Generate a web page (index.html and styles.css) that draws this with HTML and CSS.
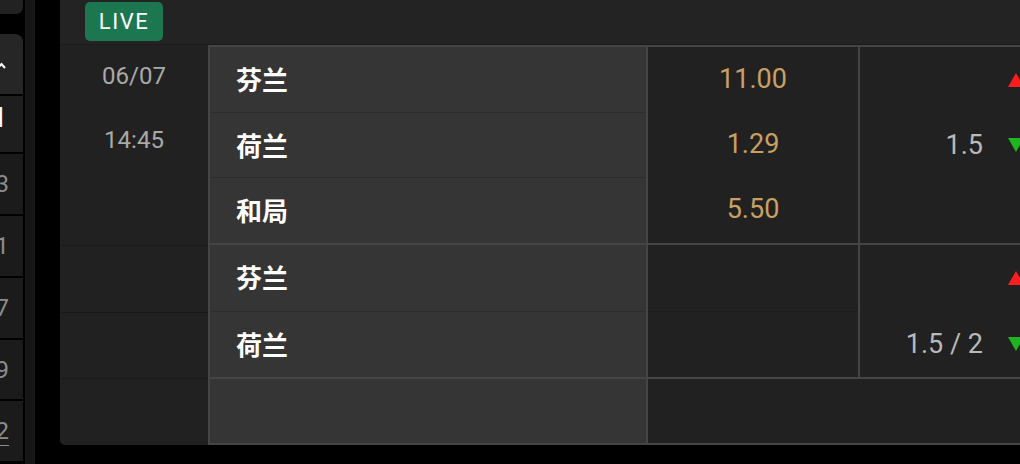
FILE: index.html
```html
<!DOCTYPE html>
<html lang="zh">
<head>
<meta charset="utf-8">
<title>LIVE</title>
<link rel="stylesheet" href="styles.css">
</head>
<body>
<div class="page">
  <aside class="sidebar">
    <div class="side-cap"></div>
    <div class="side-card side-card--head">
      <svg class="side-mark" width="6" height="8" viewBox="0 0 6 8"><path d="M-3 7 L1.5 2 L5 6" fill="none" stroke="#fff" stroke-width="2"/></svg>
    </div>
    <div class="side-card side-card--live"><div class="side-inner side-inner--white">HI</div></div>
    <div class="side-card"><div class="side-inner">13</div></div>
    <div class="side-card"><div class="side-inner">21</div></div>
    <div class="side-card"><div class="side-inner">17</div></div>
    <div class="side-card side-card--short"><div class="side-inner">19</div></div>
    <div class="side-card"><div class="side-inner side-inner--link">12</div></div>
  </aside>
  <div class="rail"></div>
  <main class="panel">
    <header class="panel-head"><span class="badge-live">LIVE</span></header>
    <section class="match">
      <div class="date-col">
        <div class="date-main"><span>06/07</span><span>14:45</span></div>
        <div class="date-row"></div>
        <div class="date-row date-row--short"></div>
        <div class="date-last"></div>
      </div>
      <div class="market">
        <div class="teams">
          <div class="team-row">芬兰</div>
          <div class="team-row">荷兰</div>
          <div class="team-row">和局</div>
        </div>
        <div class="odds">
          <div class="odds-row">11.00</div>
          <div class="odds-row">1.29</div>
          <div class="odds-row">5.50</div>
        </div>
        <div class="hdp">
          <div class="hdp-row"><span class="hdp-val"></span><span class="tri tri--up"></span></div>
          <div class="hdp-row"><span class="hdp-val">1.5</span><span class="tri tri--down"></span></div>
          <div class="hdp-row"></div>
        </div>

        <div class="teams">
          <div class="team-row">芬兰</div>
          <div class="team-row">荷兰</div>
        </div>
        <div class="odds odds--split">
          <div class="odds-row"></div>
          <div class="odds-row"></div>
        </div>
        <div class="hdp">
          <div class="hdp-row"><span class="hdp-val"></span><span class="tri tri--up"></span></div>
          <div class="hdp-row"><span class="hdp-val">1.5 / 2</span><span class="tri tri--down"></span></div>
        </div>

        <div class="teams"></div>
        <div class="odds odds--wide"></div>
      </div>
    </section>
  </main>
</div>
</body>
</html>
```
FILE: styles.css
```css
html, body {
  margin: 0;
  padding: 0;
  background: #000;
}
body {
  width: 1020px;
  height: 464px;
  overflow: hidden;
  font-family: Roboto, "Noto Sans", "Noto Sans CJK SC", sans-serif;
}
.page {
  display: flex;
  height: 464px;
  width: 1100px;
}

/* left sidebar */
.sidebar {
  width: 23px;
  flex: none;
  display: flex;
  flex-direction: column;
  gap: 2px;
  overflow: hidden;
}
.side-cap {
  height: 14px;
  flex: none;
  background: #222;
  border-bottom-right-radius: 7px;
  margin-bottom: 18px;
}
.side-card {
  flex: none;
  height: 60px;
  background: #1b1b1b;
  overflow: hidden;
  display: flex;
  align-items: center;
}
.side-card--head {
  background: #262626;
  border-top-right-radius: 8px;
  height: 60px;
  align-items: flex-start;
}
.side-mark {
  display: block;
  margin-top: 28px;
}
.side-card--live {
  height: 56px;
  background: #1e1e1e;
  align-items: flex-start;
}
.side-card--short { height: 59px; }
.side-inner {
  flex: none;
  width: 60px;
  margin-left: -51px;
  text-align: right;
  font-size: 24px;
  line-height: 28px;
  color: #8c8c8c;
}
.side-inner--white {
  color: #fff;
  font-weight: 700;
  font-size: 27px;
  margin-left: -56px;
  margin-top: 8px;
}
.side-inner--link {
  text-decoration: underline;
  text-decoration-thickness: 1px;
  text-underline-offset: 6px;
}

.rail {
  flex: none;
  width: 10px;
  margin-left: 2px;
  margin-right: 25px;
  background: #161616;
}

/* main panel */
.panel {
  flex: none;
  width: 980px;
  height: 445px;
  background: #212121;
  border-bottom-left-radius: 5px;
  overflow: hidden;
}
.panel-head {
  height: 45px;
  border-bottom: 1px solid #1a1a1a;
  background: #232323;
  padding-left: 25px;
  padding-top: 2px;
  box-sizing: border-box;
}
.badge-live {
  display: inline-flex;
  align-items: center;
  justify-content: center;
  width: 78px;
  height: 39px;
  box-sizing: border-box;
  background: #1c7751;
  border-radius: 5px;
  color: #fff;
  font-size: 22px;
  letter-spacing: 1.5px;
}

.match {
  display: flex;
  height: 400px;
}
.date-col {
  width: 148px;
  flex: none;
  display: flex;
  flex-direction: column;
}
.date-main {
  height: 201px;
  border-bottom: 1px solid #1a1a1a;
  display: flex;
  flex-direction: column;
  align-items: center;
  gap: 36px;
  padding-top: 17px;
  box-sizing: border-box;
  font-size: 24px;
  line-height: 28px;
  color: #a9a9a9;
}
.date-row {
  height: 66px;
  border-bottom: 1px solid #1a1a1a;
}
.date-row--short { height: 65px; }
.date-last { flex: 1; }

.market {
  flex: none;
  display: grid;
  grid-template-columns: 436px 210px 180px;
  grid-template-rows: 196px 132px 64px;
  gap: 2px;
  padding: 2px 0 2px 2px;
  background: #454545;
}
.teams {
  background: #353535;
  display: flex;
  flex-direction: column;
}
.team-row {
  flex: 1;
  display: flex;
  align-items: center;
  padding-left: 26px;
  padding-bottom: 2px;
  font-family: "Noto Sans CJK SC", sans-serif;
  font-weight: 700;
  font-size: 26px;
  color: #fff;
}
.team-row + .team-row { border-top: 1px solid #2c2c2c; }

.odds {
  background: #212121;
  display: flex;
  flex-direction: column;
}
.odds-row {
  flex: 1;
  display: flex;
  align-items: center;
  justify-content: center;
  padding-bottom: 2px;
  font-size: 27px;
  color: #c9a063;
}
.odds--split .odds-row + .odds-row { border-top: 1px solid #1b1b1b; }
.odds--wide { grid-column: span 2; }

.hdp {
  background: #212121;
  display: flex;
  flex-direction: column;
}
.hdp-row {
  flex: 1;
  display: flex;
  align-items: center;
  padding-right: 16px;
}
.hdp-val {
  flex: 1;
  text-align: right;
  margin-right: 25px;
  font-size: 27px;
  color: #b9b9b9;
}
.tri {
  width: 0;
  height: 0;
  border-left: 8px solid transparent;
  border-right: 8px solid transparent;
}
.tri--up { border-bottom: 14px solid #ff1e1e; }
.tri--down { border-top: 14px solid #1fb51f; }
```
